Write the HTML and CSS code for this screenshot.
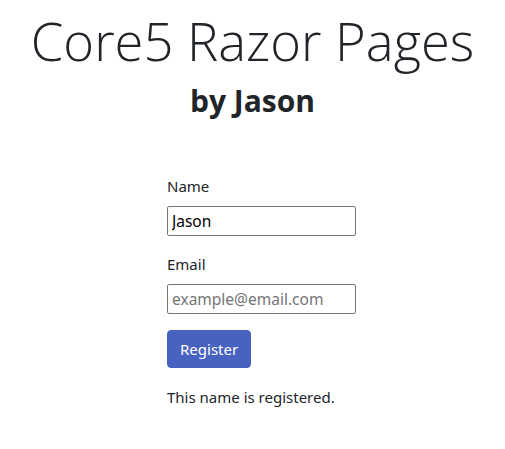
FILE: index.html
```html
<!DOCTYPE html>
<html>
<head>
<meta charset="utf-8">
<link rel="stylesheet" href="styles.css">
</head>
<body>
<header class="hero">
  <h1 class="title">Core5 Razor Pages</h1>
  <h2 class="subtitle">by Jason</h2>
</header>
<main class="form-area">
  <form class="reg-form">
    <div class="field">
      <label class="label" for="name">Name</label>
      <input class="input" id="name" type="text" value="Jason">
    </div>
    <div class="field">
      <label class="label" for="email">Email</label>
      <input class="input" id="email" type="email" placeholder="example@email.com">
    </div>
    <button class="btn" type="button">Register</button>
    <p class="message">This name is registered.</p>
  </form>
</main>
</body>
</html>
```
FILE: styles.css
```css
* { box-sizing: border-box; }
body {
  margin: 0;
  font-family: "Noto Sans", "Open Sans", sans-serif;
  font-size: 15px;
  color: #212529;
  background: #fff;
}
.hero {
  text-align: center;
  padding-top: 8px;
}
.title {
  margin: 0;
  font-family: "Open Sans", sans-serif;
  font-weight: 300;
  font-size: 52.5px;
  line-height: 66px;
  color: #212529;
}
.subtitle {
  margin: 9px 0 0;
  font-family: "Open Sans", sans-serif;
  font-weight: 700;
  font-size: 30px;
  line-height: 36px;
}
.form-area {
  padding-left: 167px;
  padding-top: 56px;
}
.reg-form {
  display: flex;
  flex-direction: column;
  align-items: flex-start;
}
.field {
  display: flex;
  flex-direction: column;
  align-items: flex-start;
  margin-bottom: 16px;
}
.field:first-child { margin-bottom: 17px; }
.label {
  line-height: 22px;
  margin-bottom: 9px;
}
.input {
  width: 189px;
  height: 30px;
  border: 1px solid #767676;
  border-radius: 2px;
  padding: 0 4px;
  font-family: inherit;
  font-size: 15.5px;
  color: #000;
}
.input::placeholder { color: #757575; }
.btn {
  height: 38px;
  padding: 0 12px;
  background: #4862c0;
  color: #fff;
  border: 1px solid #4560be;
  border-radius: 4px;
  font-family: inherit;
  font-size: 15px;
}
.message {
  margin: 18px 0 0;
  line-height: 22px;
}
```
